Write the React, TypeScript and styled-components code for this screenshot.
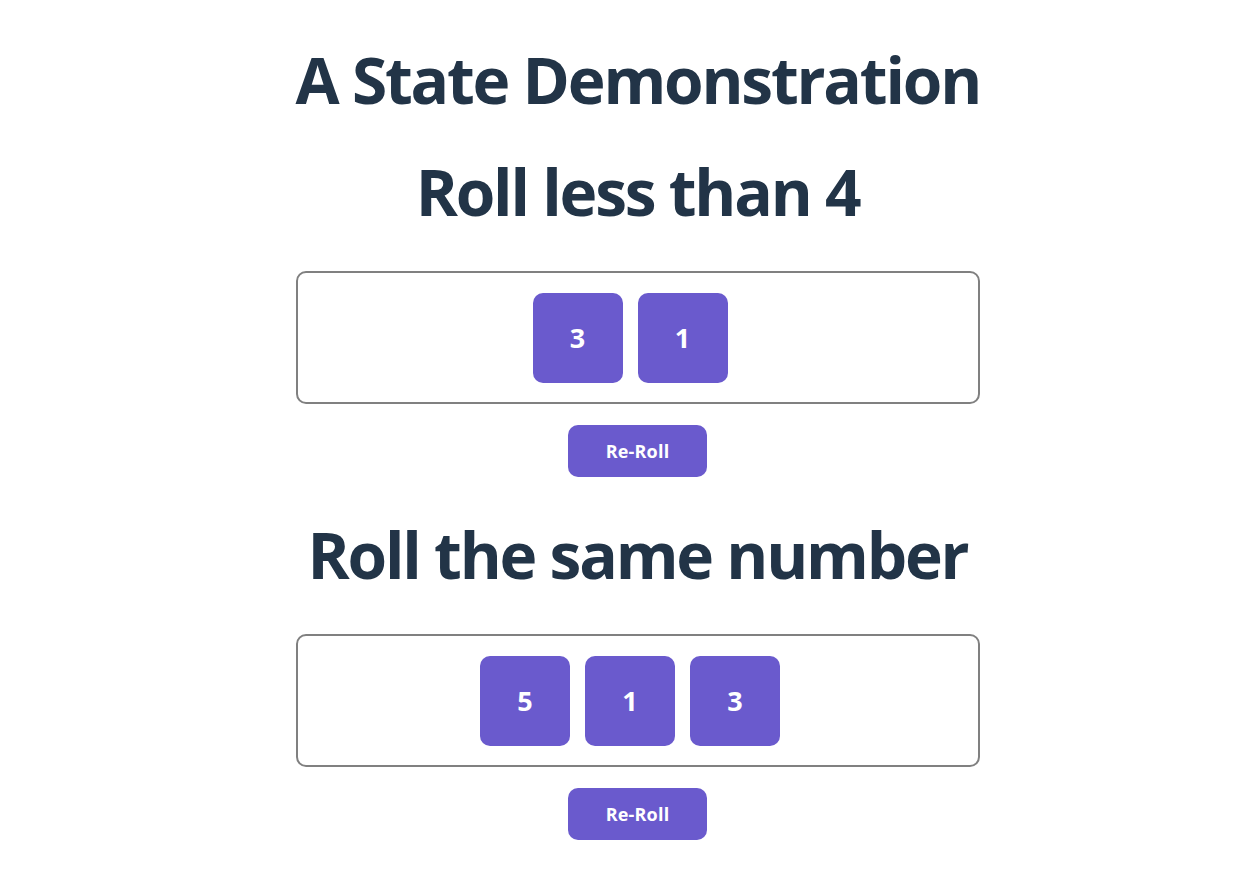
import React, { useState } from "react";
import styled, { createGlobalStyle } from "styled-components";

const GlobalStyle = createGlobalStyle`
  html, body {
    margin: 0;
    padding: 0;
    background: #ffffff;
  }
  body {
    font-family: "Open Sans", "Noto Sans", sans-serif;
    color: #223447;
  }
`;

const Page = styled.main`
  width: 684px;
  margin: 0 auto;
  padding: 42px 0 0 34px;
  display: flex;
  flex-direction: column;
  align-items: stretch;
`;

const Title = styled.h1`
  margin: 0;
  font-size: 64px;
  line-height: 76px;
  font-weight: 700;
  text-align: center;
  color: #223447;
  letter-spacing: -2.2px;
  white-space: nowrap;
`;

const Section = styled.section<{ $first?: boolean }>`
  display: flex;
  flex-direction: column;
  align-items: center;
  margin-top: ${(p) => (p.$first ? "36px" : "40px")};
`;

const Heading = styled.h2`
  margin: 0 0 41px;
  font-size: 64px;
  line-height: 76px;
  font-weight: 700;
  text-align: center;
  color: #223447;
  letter-spacing: -2.2px;
  white-space: nowrap;
`;

const Tray = styled.div`
  box-sizing: border-box;
  width: 684px;
  height: 133px;
  border: 2px solid #808080;
  border-radius: 10px;
  display: flex;
  justify-content: center;
  align-items: center;
`;

const Die = styled.div`
  width: 90px;
  height: 90px;
  margin-right: 15px;
  border-radius: 10px;
  background: #6a5acd;
  color: #ffffff;
  font-size: 27px;
  font-weight: 700;
  display: flex;
  justify-content: center;
  align-items: center;
`;

const RollButton = styled.button`
  margin-top: 21px;
  width: 139px;
  height: 52px;
  padding: 0;
  border: none;
  border-radius: 10px;
  background: #6a5acd;
  color: #ffffff;
  font-family: "Open Sans", "Noto Sans", sans-serif;
  font-size: 18px;
  font-weight: 700;
  letter-spacing: 0.2px;
  cursor: pointer;
`;

type GameProps = {
  title: string;
  initial: number[];
  first?: boolean;
};

function Game({ title, initial, first }: GameProps) {
  const [dice, setDice] = useState<number[]>(initial);
  const reroll = () =>
    setDice(dice.map(() => Math.floor(Math.random() * 6) + 1));
  return (
    <Section $first={first}>
      <Heading>{title}</Heading>
      <Tray>
        {dice.map((d, i) => (
          <Die key={i}>{d}</Die>
        ))}
      </Tray>
      <RollButton onClick={reroll}>Re-Roll</RollButton>
    </Section>
  );
}

export default function App() {
  return (
    <>
      <GlobalStyle />
      <Page>
        <Title>A State Demonstration</Title>
        <Game title="Roll less than 4" initial={[3, 1]} first />
        <Game title="Roll the same number" initial={[5, 1, 3]} />
      </Page>
    </>
  );
}
